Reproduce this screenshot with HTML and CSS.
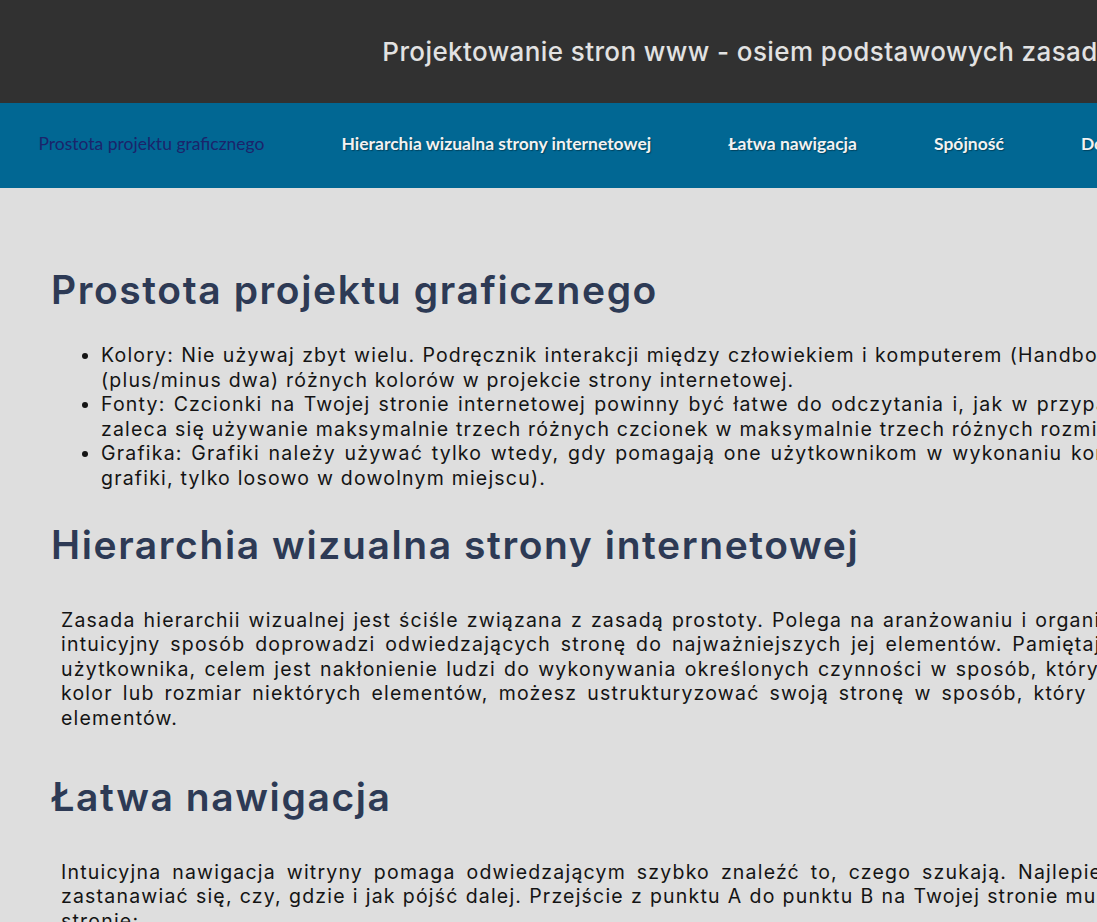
FILE: index.html
```html
<!DOCTYPE html>
<html lang="pl">
<head>
<meta charset="utf-8">
<title>Projektowanie stron www - osiem podstawowych zasad</title>
<link rel="stylesheet" href="styles.css">
</head>
<body>
<div class="page">
  <header class="site-header">
    <h1 class="site-title">Projektowanie stron www - osiem podstawowych zasad</h1>
  </header>
  <nav class="main-nav">
    <a class="nav-link visited" href="#prostota">Prostota projektu graficznego</a>
    <a class="nav-link" href="#hierarchia">Hierarchia wizualna strony internetowej</a>
    <a class="nav-link" href="#nawigacja">Łatwa nawigacja</a>
    <a class="nav-link" href="#spojnosc">Spójność</a>
    <a class="nav-link" href="#dostepnosc">Dostępność</a>
    <a class="nav-link" href="#konwencje">Konwencje</a>
  </nav>
  <main class="content">
    <section id="prostota">
      <h2 class="section-title">Prostota projektu graficznego</h2>
      <ul class="rules">
        <li>Kolory: Nie używaj zbyt wielu. Podręcznik interakcji między człowiekiem i komputerem (Handbook) zaleca stosowanie do pięciu (plus/minus dwa) różnych kolorów w projekcie strony internetowej.</li>
        <li>Fonty: Czcionki na Twojej stronie internetowej powinny być łatwe do odczytania i, jak w przypadku kolorów, umiar jest ważny. zaleca się używanie maksymalnie trzech różnych czcionek w maksymalnie trzech różnych rozmiarach.</li>
        <li>Grafika: Grafiki należy używać tylko wtedy, gdy pomagają one użytkownikom w wykonaniu konkretnego zadania (nie dodawaj grafiki, tylko losowo w dowolnym miejscu).</li>
      </ul>
    </section>
    <section id="hierarchia">
      <h2 class="section-title">Hierarchia wizualna strony internetowej</h2>
      <p class="text">Zasada hierarchii wizualnej jest ściśle związana z zasadą prostoty. Polega na aranżowaniu i organizowaniu treści, które w prosty i intuicyjny sposób doprowadzi odwiedzających stronę do najważniejszych jej elementów. Pamiętaj, że w przypadku doświadczeń użytkownika, celem jest nakłonienie ludzi do wykonywania określonych czynności w sposób, który wydaje się naturalny. Ustalając kolor lub rozmiar niektórych elementów, możesz ustrukturyzować swoją stronę w sposób, który wyraźnie wskaże najważniejsze elementów.</p>
    </section>
    <section id="nawigacja">
      <h2 class="section-title">Łatwa nawigacja</h2>
      <p class="text">Intuicyjna nawigacja witryny pomaga odwiedzającym szybko znaleźć to, czego szukają. Najlepiej gdy goście strony nie muszą zastanawiać się, czy, gdzie i jak pójść dalej. Przejście z punktu A do punktu B na Twojej stronie musi być proste. Jak to uzyskać na stronie:</p>
      <ul class="rules">
        <li>Menu: umieść główną nawigację w widocznym, przewidywalnym miejscu.</li>
        <li>Okruszki: pokaż użytkownikowi, gdzie aktualnie się znajduje.</li>
      </ul>
    </section>
  </main>
</div>
</body>
</html>
```

FILE: styles.css
```css
html, body {
  margin: 0;
  padding: 0;
  background: #dedede;
}

body {
  font-family: "Inter", "Lato", sans-serif;
  color: #141414;
}

.page {
  width: 1480px;
}

.site-header {
  height: 103px;
  background: #313131;
  display: flex;
  align-items: center;
  justify-content: center;
}

.site-title {
  margin: 0;
  font-size: 26px;
  font-weight: 500;
  letter-spacing: 0.4px;
  color: #e2e2e2;
}

.main-nav {
  height: 85px;
  background: #016793;
  display: flex;
  align-items: center;
  padding-bottom: 4px;
  box-sizing: border-box;
}

.nav-link {
  padding: 0 38.5px;
  font-family: "Lato", sans-serif;
  font-size: 17.5px;
  font-weight: 700;
  color: #f2f2f2;
  text-decoration: none;
  white-space: nowrap;
  text-shadow: 1px 1px 1px rgba(0, 0, 0, 0.35);
}

.nav-link.visited {
  font-weight: 400;
  color: #1b246b;
  text-shadow: none;
}

.content {
  padding: 52px 48px 40px;
}

.section-title {
  padding-left: 3px;
  font-size: 39px;
  font-weight: 600;
  letter-spacing: 1.6px;
  color: #2d3a55;
  margin: 26px 0;
  line-height: 48px;
}

.rules {
  margin: 29px 0 30px 13px;
  padding-left: 40px;
  font-size: 19.5px;
  letter-spacing: 1.2px;
  line-height: 24.6px;
  text-align: justify;
}

.text {
  margin: 26px 0;
  padding: 13px 0 16px 13px;
  font-size: 19.5px;
  letter-spacing: 1.2px;
  line-height: 24.6px;
  text-align: justify;
}
```
